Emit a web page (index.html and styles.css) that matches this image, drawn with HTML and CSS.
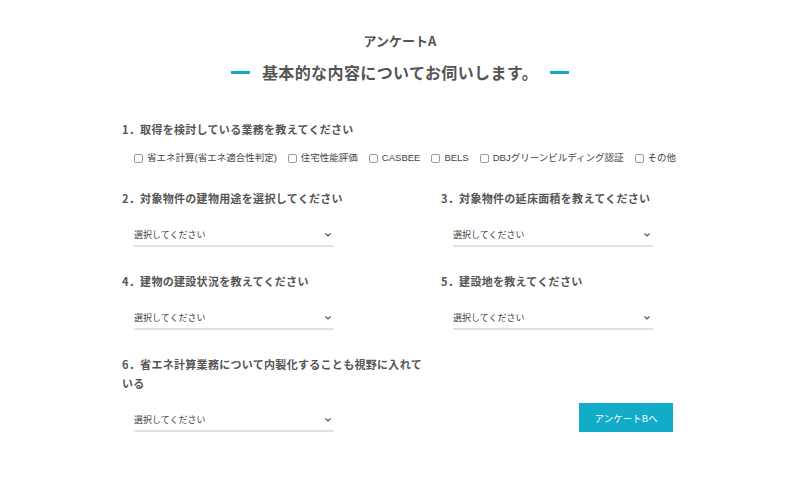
FILE: index.html
```html
<!DOCTYPE html>
<html lang="ja">
<head>
<meta charset="utf-8">
<title>アンケートA</title>
<link rel="stylesheet" href="styles.css">
</head>
<body>
<main class="page">
  <header class="head">
    <h1 class="title">アンケートA</h1>
    <h2 class="subtitle"><span class="dash"></span><span>基本的な内容についてお伺いします。</span><span class="dash"></span></h2>
  </header>
  <form class="form">
    <section class="q1">
      <p class="label">1．取得を検討している業務を教えてください</p>
      <div class="checks">
        <label class="check"><span class="box"></span>省エネ計算(省エネ適合性判定)</label>
        <label class="check"><span class="box"></span>住宅性能評価</label>
        <label class="check"><span class="box"></span>CASBEE</label>
        <label class="check"><span class="box"></span>BELS</label>
        <label class="check"><span class="box"></span>DBJグリーンビルディング認証</label>
        <label class="check"><span class="box"></span>その他</label>
      </div>
    </section>
    <div class="grid">
      <div class="cell">
        <p class="label">2．対象物件の建物用途を選択してください</p>
        <div class="select"><span>選択してください</span><svg class="chev" width="6" height="4" viewBox="0 0 6 4"><path d="M0.5 0.5 L3 3 L5.5 0.5" fill="none" stroke="#555" stroke-width="1.2"/></svg></div>
      </div>
      <div class="cell">
        <p class="label">3．対象物件の延床面積を教えてください</p>
        <div class="select"><span>選択してください</span><svg class="chev" width="6" height="4" viewBox="0 0 6 4"><path d="M0.5 0.5 L3 3 L5.5 0.5" fill="none" stroke="#555" stroke-width="1.2"/></svg></div>
      </div>
      <div class="cell">
        <p class="label">4．建物の建設状況を教えてください</p>
        <div class="select"><span>選択してください</span><svg class="chev" width="6" height="4" viewBox="0 0 6 4"><path d="M0.5 0.5 L3 3 L5.5 0.5" fill="none" stroke="#555" stroke-width="1.2"/></svg></div>
      </div>
      <div class="cell">
        <p class="label">5．建設地を教えてください</p>
        <div class="select"><span>選択してください</span><svg class="chev" width="6" height="4" viewBox="0 0 6 4"><path d="M0.5 0.5 L3 3 L5.5 0.5" fill="none" stroke="#555" stroke-width="1.2"/></svg></div>
      </div>
      <div class="cell">
        <p class="label">6．省エネ計算業務について内製化することも視野に入れている</p>
        <div class="select"><span>選択してください</span><svg class="chev" width="6" height="4" viewBox="0 0 6 4"><path d="M0.5 0.5 L3 3 L5.5 0.5" fill="none" stroke="#555" stroke-width="1.2"/></svg></div>
      </div>
      <div class="cell cell-btn">
        <button type="button" class="btn">アンケートBへ</button>
      </div>
    </div>
  </form>
</main>
</body>
</html>
```

FILE: styles.css
```css
* { box-sizing: border-box; }
body {
  margin: 0;
  background: #fff;
  color: #555;
  font-family: "Noto Sans CJK JP", "Noto Sans", sans-serif;
}
.page { padding-top: 31px; }
.head { text-align: center; }
.title {
  margin: 0;
  font-size: 13px;
  line-height: 20px;
  font-weight: 700;
  color: #555;
}
.subtitle {
  margin: 9px 0 0;
  display: flex;
  justify-content: center;
  align-items: center;
  gap: 12px;
  font-size: 16px;
  line-height: 24px;
  letter-spacing: 0.4px;
  font-weight: 700;
  color: #555;
}
.dash {
  display: block;
  width: 19px;
  height: 3px;
  background: #14a9cc;
}
.form {
  margin: 36px 0 0 122px;
  width: 640px;
}
.label {
  margin: 0;
  font-size: 11px;
  letter-spacing: 0.3px;
  line-height: 19px;
  font-weight: 700;
  color: #555;
}
.checks {
  margin-top: 12px;
  padding-left: 12px;
  display: flex;
  gap: 11px;
  font-family: "Liberation Sans", "Noto Sans CJK JP", sans-serif;
  font-size: 9.5px;
  line-height: 14px;
  color: #444;
  white-space: nowrap;
}
.check {
  display: flex;
  align-items: center;
  gap: 4px;
}
.box {
  display: block;
  width: 9px;
  height: 9px;
  border: 1px solid #999;
  border-radius: 2px;
  background: #fff;
}
.grid {
  margin-top: 24px;
  display: grid;
  grid-template-columns: 319px 319px;
  row-gap: 25px;
}
.cell .label { padding-right: 14px; }
.select {
  margin: 16px 0 0 12px;
  width: 200px;
  height: 23px;
  border-bottom: 2px solid #e2e2e2;
  display: flex;
  align-items: center;
  justify-content: space-between;
  padding-right: 3px;
  font-size: 9px;
  color: #444;
}
.chev { display: block; }
.cell-btn {
  display: flex;
  align-items: flex-end;
}
.btn {
  margin-left: 138px;
  margin-bottom: -1px;
  width: 94px;
  height: 30px;
  border: none;
  background: #12acc8;
  color: #fff;
  font-family: inherit;
  font-size: 9.5px;
  padding: 0;
}
```
